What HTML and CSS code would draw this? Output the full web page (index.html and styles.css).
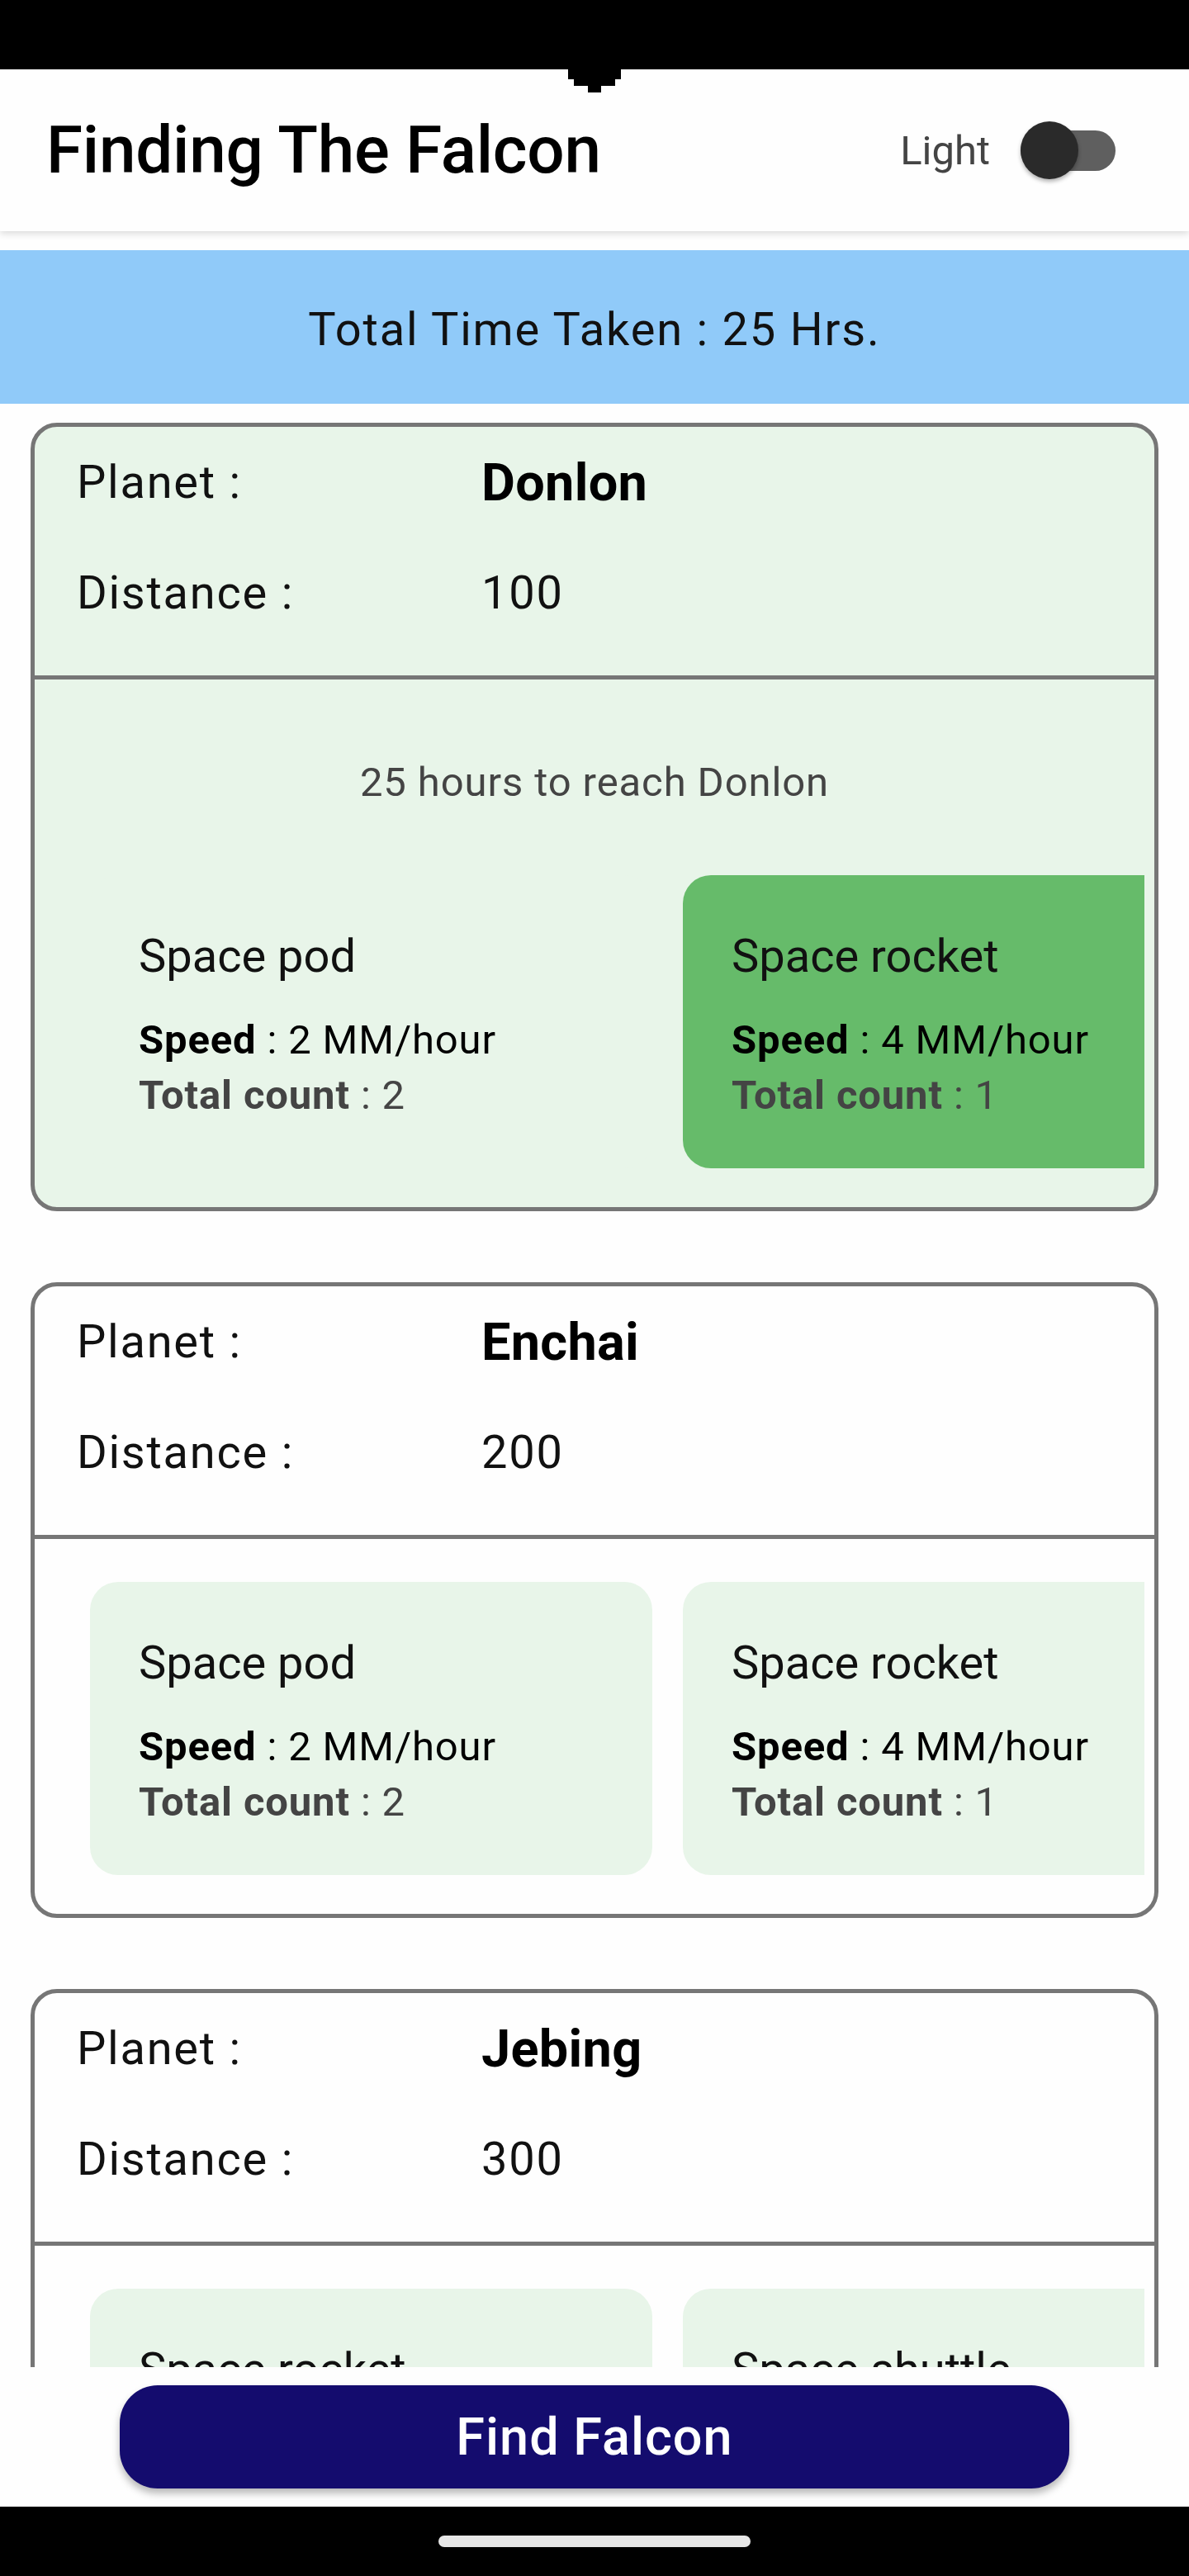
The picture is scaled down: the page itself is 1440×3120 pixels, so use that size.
FILE: index.html
```html
<!DOCTYPE html>
<html lang="en">
<head>
<meta charset="utf-8">
<title>Finding The Falcon</title>
<link rel="stylesheet" href="styles.css">
</head>
<body>
<div class="phone">
  <div class="statusbar"></div>
  <svg class="notch" width="64" height="28" viewBox="0 0 64 28" aria-hidden="true">
    <polygon points="0,0 64,0 64,12 57,12 57,20 40,20 40,28 24,28 24,20 7,20 7,12 0,12" fill="#000"/>
  </svg>
  <header class="appbar">
    <h1 class="title">Finding The Falcon</h1>
    <div class="theme-toggle">
      <span class="toggle-label">Light</span>
      <span class="switch"><span class="switch-track"></span><span class="switch-thumb"></span></span>
    </div>
  </header>

  <main class="content">
    <div class="banner">Total Time Taken : 25 Hrs.</div>

    <section class="card card--selected">
      <div class="card-head">
        <div class="info-row"><span class="label">Planet :</span><span class="planet-name">Donlon</span></div>
        <div class="info-row"><span class="label">Distance :</span><span class="value">100</span></div>
      </div>
      <div class="card-body">
        <p class="eta">25 hours to reach Donlon</p>
        <div class="vehicles">
          <div class="vehicle">
            <div class="vehicle-name">Space pod</div>
            <div class="vehicle-speed"><b>Speed</b> : 2 MM/hour</div>
            <div class="vehicle-count"><b>Total count</b> : 2</div>
          </div>
          <div class="vehicle vehicle--selected">
            <div class="vehicle-name">Space rocket</div>
            <div class="vehicle-speed"><b>Speed</b> : 4 MM/hour</div>
            <div class="vehicle-count"><b>Total count</b> : 1</div>
          </div>
        </div>
      </div>
    </section>

    <section class="card">
      <div class="card-head">
        <div class="info-row"><span class="label">Planet :</span><span class="planet-name">Enchai</span></div>
        <div class="info-row"><span class="label">Distance :</span><span class="value">200</span></div>
      </div>
      <div class="card-body">
        <div class="vehicles">
          <div class="vehicle">
            <div class="vehicle-name">Space pod</div>
            <div class="vehicle-speed"><b>Speed</b> : 2 MM/hour</div>
            <div class="vehicle-count"><b>Total count</b> : 2</div>
          </div>
          <div class="vehicle">
            <div class="vehicle-name">Space rocket</div>
            <div class="vehicle-speed"><b>Speed</b> : 4 MM/hour</div>
            <div class="vehicle-count"><b>Total count</b> : 1</div>
          </div>
        </div>
      </div>
    </section>

    <section class="card">
      <div class="card-head">
        <div class="info-row"><span class="label">Planet :</span><span class="planet-name">Jebing</span></div>
        <div class="info-row"><span class="label">Distance :</span><span class="value">300</span></div>
      </div>
      <div class="card-body">
        <div class="vehicles">
          <div class="vehicle">
            <div class="vehicle-name">Space rocket</div>
            <div class="vehicle-speed"><b>Speed</b> : 4 MM/hour</div>
            <div class="vehicle-count"><b>Total count</b> : 1</div>
          </div>
          <div class="vehicle">
            <div class="vehicle-name">Space shuttle</div>
            <div class="vehicle-speed"><b>Speed</b> : 5 MM/hour</div>
            <div class="vehicle-count"><b>Total count</b> : 1</div>
          </div>
        </div>
      </div>
    </section>
  </main>

  <footer class="bottom">
    <button class="find-btn" type="button">Find Falcon</button>
  </footer>
  <div class="navbar"><span class="home-pill"></span></div>
</div>
</body>
</html>
```

FILE: styles.css
```css
* { box-sizing: border-box; }

html, body {
  margin: 0;
  padding: 0;
  background: #fefefe;
}

body {
  font-family: Roboto, "Liberation Sans", Arial, sans-serif;
  color: #111;
}

.phone {
  position: relative;
  width: 1440px;
  height: 3120px;
  overflow: hidden;
  display: flex;
  flex-direction: column;
  background: #fefefe;
}

.statusbar {
  height: 84px;
  flex: none;
  background: #000;
}

.notch {
  position: absolute;
  left: 688px;
  top: 84px;
  z-index: 5;
}

/* ---------- App bar ---------- */
.appbar {
  position: relative;
  z-index: 2;
  flex: none;
  height: 196px;
  display: flex;
  align-items: center;
  justify-content: space-between;
  padding: 0 89px 0 56px;
  background: #fefefe;
  box-shadow: 0 3px 8px rgba(0, 0, 0, 0.14);
}

.title {
  margin: 0;
  font-size: 80px;
  font-weight: 500;
  color: #000;
  letter-spacing: -0.25px;
}

.theme-toggle {
  display: flex;
  align-items: center;
  gap: 37px;
}

.toggle-label {
  font-size: 49px;
  color: #444;
}

.switch {
  position: relative;
  width: 115px;
  height: 70px;
  display: flex;
  align-items: center;
}

.switch-track {
  width: 115px;
  height: 49px;
  border-radius: 25px;
  background: #5f5f5f;
}

.switch-thumb {
  position: absolute;
  left: 0;
  top: 0;
  width: 70px;
  height: 70px;
  border-radius: 50%;
  background: #2a2a2a;
  box-shadow: 0 3px 5px rgba(0, 0, 0, 0.3);
}

/* ---------- Content ---------- */
.content {
  flex: none;
  height: 2587px;
  overflow: hidden;
  padding-top: 23px;
}

.banner {
  height: 186px;
  display: flex;
  align-items: center;
  justify-content: center;
  padding-top: 6px;
  background: #90caf9;
  font-size: 56px;
  letter-spacing: 1.8px;
  color: #111;
}

.card {
  margin: 23px 37px 86px 37px;
  border: 5px solid #767676;
  border-radius: 32px;
  background: #fefefe;
  overflow: hidden;
}

.card--selected {
  background: #e8f5e9;
}

.card-head {
  padding: 0 0 33px 51px;
  border-bottom: 5px solid #767676;
}

.info-row {
  height: 134px;
  display: grid;
  grid-template-columns: 490px 1fr;
  align-items: center;
}

.label,
.value {
  font-size: 56px;
  letter-spacing: 1.75px;
  color: #111;
}

.planet-name {
  font-size: 63px;
  font-weight: 700;
  letter-spacing: 0.3px;
  color: #000;
}

.card-body {
  padding: 52px 0 47px;
}

.eta {
  margin: 40px 0 79px;
  text-align: center;
  font-size: 49px;
  line-height: 66px;
  letter-spacing: 0.9px;
  color: #444;
}

.vehicles {
  margin: 0 12px;
  padding-left: 55px;
  display: flex;
  gap: 37px;
  overflow: hidden;
}

.vehicle {
  flex: none;
  width: 681px;
  height: 355px;
  padding: 65px 0 0 59px;
  border-radius: 34px;
  background: #e8f5e9;
}

.vehicle--selected {
  background: #66bb6a;
}

.vehicle-name {
  font-size: 56px;
  line-height: 66px;
  color: #111;
  margin-bottom: 35px;
}

.vehicle-speed,
.vehicle-count {
  font-size: 49px;
  line-height: 67px;
  letter-spacing: 0.85px;
  white-space: nowrap;
}

.vehicle-speed {
  color: #000;
}

.vehicle-count {
  color: #444;
}

.vehicle b {
  font-weight: 700;
}

/* ---------- Bottom ---------- */
.bottom {
  flex: none;
  height: 169px;
  padding-top: 22px;
  display: flex;
  justify-content: center;
  background: #fefefe;
}

.find-btn {
  width: 1150px;
  height: 125px;
  border: none;
  border-radius: 46px;
  background: #140c6e;
  color: #fff;
  font-family: Roboto, "Liberation Sans", Arial, sans-serif;
  font-size: 63px;
  font-weight: 500;
  letter-spacing: 1px;
  box-shadow: 0 6px 10px rgba(0, 0, 0, 0.28);
}

.navbar {
  flex: none;
  height: 84px;
  background: #000;
  display: flex;
  justify-content: center;
  padding-top: 35px;
}

.home-pill {
  width: 378px;
  height: 14px;
  border-radius: 7px;
  background: #e6e6e6;
}
```
